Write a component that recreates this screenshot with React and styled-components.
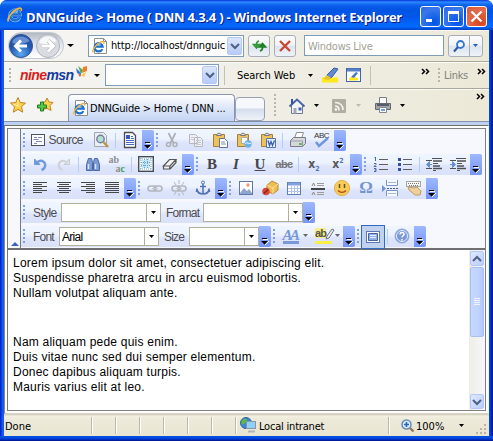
import React from 'react';
import styled, { createGlobalStyle, css } from 'styled-components';

const Global = createGlobalStyle`
  * { box-sizing: border-box; }
  body { margin: 0; overflow: hidden; font-family: "DejaVu Sans Condensed", "DejaVu Sans", sans-serif; font-size: 11px; color: #000; }
  svg { display: block; flex: none; overflow: visible; }
`;

const placed = css`
  flex: none;
  margin-left: ${(p) => p.$gap || 0}px;
  ${(p) => p.$w && `width: ${p.$w}px;`}
`;

/* window frame */
const Window = styled.div`
  width: 493px; height: 441px; display: flex; flex-direction: column;
  background: linear-gradient(90deg, #0019cf 0, #0831d9 1px, #166aee 3px, #0855dd 4px, #0855dd 489px, #0040dc 490px, #001ea0 492px);
  border-radius: 7px 7px 0 0; overflow: hidden;
`;
const TitleBar = styled.header`
  height: 30px; flex: none; display: flex; align-items: center; padding: 0 6px 0 7px;
  background: linear-gradient(#0831d9 0, #2b8bff 2px, #0f62ee 5px, #0055e3 9px, #0256ea 17px, #0366fb 24px, #0467ff 27px, #0040c0 30px);
`;
const Title = styled.h1`
  margin: 3px 0 0 3px; width: 393px; flex: none; white-space: nowrap;
  font: bold 13px "Open Sans", "Noto Sans", sans-serif; letter-spacing: ${(p) => p.$ls}px;
  color: #fff; text-shadow: 1px 1px 0 #0a1883;
`;
const Captions = styled.div`display: flex; gap: 2px; margin: 3px 0 0 auto;`;
const Caption = styled.button`
  width: 21px; height: 21px; padding: 0; border: 1px solid #fff; border-radius: 3px; display: grid; place-items: center;
  background: ${(p) => (p.$close ? 'radial-gradient(circle at 70% 80%, #d8431a, #e4694b 60%, #d7553a)' : 'radial-gradient(circle at 70% 80%, #0054e9, #3a77ec 65%, #2e66dd)')};
`;
const Body = styled.main`flex: 1; margin: 0 4px; display: flex; flex-direction: column; min-height: 0; background: #ece9d8;`;
const BottomEdge = styled.div`height: 5px; flex: none; background: linear-gradient(#0855dd, #0040dc 50%, #00138c);`;

/* browser bars */
const Bar = styled.div`
  height: ${(p) => p.$h}px; flex: none; display: flex; align-items: center;
  background: linear-gradient(90deg, #f5f5f4, #efede2 65%, #ece9d8);
  border-bottom: ${(p) => (p.$line ? '1px solid #aaa89a' : '0')};
  box-shadow: inset 0 1px #fbfaf6;
`;
const Cell = styled.div`${placed}; margin-top: ${(p) => p.$top || 0}px;`;
const Label = styled.span`
  ${placed}; white-space: nowrap; line-height: 15px; margin-top: ${(p) => p.$top || 0}px;
  letter-spacing: ${(p) => p.$ls || 0}px; color: ${(p) => p.$color || '#000'};
`;
const NavPill = styled.div`
  ${placed}; height: 27px; border-radius: 14px; display: flex; justify-content: flex-start; gap: 3px; align-items: center;
  background: linear-gradient(#b4bac4, #e2e5ea 45%, #fff); border: 1px solid #c3c7ce;
`;
const Field = styled.div`
  ${placed}; height: ${(p) => p.$h || 22}px; border: 1px solid #7f9db9; background: #fff; display: flex; align-items: center;
  padding: 0 1px 0 3px;
`;
const DropButton = styled.button`
  width: 15px; height: ${(p) => p.$h || 18}px; margin: 0 0 0 auto; padding: 0; flex: none; border: 1px solid #b5c8f5; border-radius: 2px;
  background: linear-gradient(#dbe6fd, #b7cbf7); display: grid; place-items: center;
`;
const GlassButton = styled.button`
  ${placed}; height: 22px; padding: 0; border: 1px solid #a8adb8; border-radius: 3px; display: flex; align-items: center; justify-content: space-evenly;
  background: linear-gradient(#fbfbfb 0, #f2f3f5 46%, #dde4ef 50%, #eef2f8);
`;
const ButtonRule = styled.i`width: 1px; height: 20px; background: #a8adb8;`;
const Grip = styled.i`
  ${placed}; width: 2px; height: ${(p) => p.$h || 15}px;
  background: repeating-linear-gradient(#b9b6a6 0 2px, transparent 2px 4px);
`;
const Rule = styled.i`${placed}; width: 1px; height: 19px; background: #c4c1b2;`;
const Brand = styled.strong`
  ${placed}; font: italic bold 14px "Liberation Sans", sans-serif; letter-spacing: ${(p) => p.$ls}px; color: #d81e20; white-space: nowrap;
  span { color: #143c9c; }
`;
const Tab = styled.div`
  ${placed}; height: 27px; align-self: flex-end; display: flex; align-items: center; padding-left: 4px;
  border: 1px solid #8a95ad; border-bottom: 0; border-radius: 4px 4px 0 0;
  background: linear-gradient(#fff, #e3ebf9 40%, #c4d5f4);
`;
const NewTab = styled.div`
  ${placed}; height: 24px; align-self: flex-end; border: 1px solid #979fb2; border-radius: 4px;
  background: linear-gradient(#f7f8fb 45%, #d5deed 50%, #eff2f8);
`;
const TabBase = styled.div`height: 4px; flex: none; background: linear-gradient(#8492ac 0 1px, #bed0f2 1px);`;

/* rich text editor */
const Frame = styled.section`
  height: 289px; flex: none; padding: 2px; border: 1px solid; border-color: #716f64 #f5f3e8 #d6d3c4 #8b897c; background: #fff;
  display: flex;
`;
const Editor = styled.div`
  flex: 1; border: 1px solid #808080; display: flex; flex-direction: column; min-width: 0; border-left-color: #77757a;
`;
const ToolArea = styled.div`height: 121px; flex: none; display: flex; background: #f7f8fd; border-bottom: 2px solid #6f6f73;`;
const Collapse = styled.button`
  width: 13px; padding: 0 0 2px 1px; border: 0; border-right: 1px solid #77777d; background: #f7f8fd; flex: none; display: flex; align-items: flex-end; justify-content: center;
`;
const Rows = styled.div`flex: 1; min-width: 0; padding-top: 1px; display: flex; flex-direction: column; gap: 3px;`;
const Row = styled.div`display: flex; height: 21px; flex: none;`;
const Strip = styled.div`
  display: flex; flex: none; align-items: center; height: 21px;
  background: linear-gradient(#eef5ff, #edf3fe 40%, #dde4fb 60%, #d9e1fa);
`;
const Dots = styled.i`
  width: ${(p) => p.$w || 6}px; height: 15px; flex: none;
  background: repeating-linear-gradient(#7f9fe6 0 2px, transparent 2px 4px) 2px 0 / 2px 100% no-repeat;
`;
const Slot = styled.span`width: ${(p) => p.$w || 24}px; height: 20px; flex: none; align-self: flex-start; display: flex; align-items: center; justify-content: center;`;
const Split = styled.i`width: ${(p) => p.$w || 5}px; height: 15px; flex: none; background: linear-gradient(#b4cdf5, #b4cdf5) 2px 0 / 1px 100% no-repeat;`;
const More = styled.button`
  width: 12px; height: 21px; flex: none; padding: 0 0 1px; border: 0; border-radius: 0 2px 2px 0; display: flex; align-items: flex-end; justify-content: center;
  background: linear-gradient(#9db8ff, #7795f7);
`;
const ToolLabel = styled.span`
  ${placed}; font: 12px "Liberation Sans", sans-serif; letter-spacing: ${(p) => p.$ls}px; color: ${(p) => p.$color || '#4c4c50'}; white-space: nowrap;
`;
const Select = styled.div`
  ${placed}; height: 19px; border: 1px solid #b0b09c; background: #fff; display: flex; align-items: center; padding-left: 2px;
`;
const SelectArrow = styled.span`
  width: 14px; height: 17px; margin-left: auto; border-left: 1px solid #b0b09c; display: grid; place-items: center; flex: none;
`;
const Pressed = styled.span`width: 24px; height: 24px; flex: none; border: 1px solid #316ac5; background: #c1d2ee; display: grid; place-items: center;`;
const Page = styled.div`flex: 1; display: flex; background: #fff; min-height: 0;`;
const Text = styled.article`
  flex: 1; padding: 6px 0 0 5px; font: 12px/15px "Liberation Sans", sans-serif; letter-spacing: .22px; color: #000;
  p { margin: 0; white-space: nowrap; }
  p + p { margin-top: 34px; }
`;
const Line = styled.span`display: block;`;
const Scroll = styled.div`width: 16px; flex: none; background: linear-gradient(90deg, #eeede5, #f7f7fd); display: flex; flex-direction: column; padding: 1px 1px 1px 1px;`;
const ScrollButton = styled.button`
  width: 14px; height: 15px; flex: none; padding: 0; border: 1px solid #b4c8f6; border-radius: 2px; background: linear-gradient(135deg, #dfe9ff, #b9cdfa); display: grid; place-items: center;
`;
const Thumb = styled.div`
  width: 14px; height: 70px; margin: 1px 0 auto; border: 1px solid #a9c0f2; border-radius: 2px; background: linear-gradient(90deg, #c6d8ff, #bfd3fd 60%, #b0c8f8); display: grid; place-items: center;
`;

/* status bar */
const Status = styled.footer`flex: 1; display: flex; align-items: center; background: linear-gradient(#c9c6b5 0, #f2efe2 2px, #ece9d8 6px, #e9e5d3);`;
const Pane = styled.i`${placed}; height: 17px; width: 2px; background: linear-gradient(90deg, #bdb9a6 50%, #fff 50%);`;

const S = ({ w = 16, h = 16, children, ...r }) => (
  <svg width={w} height={h} viewBox={`0 0 ${w} ${h}`} fill="none" {...r}>{children}</svg>
);
const Tri = ({ c = '#000', w = 6 }) => <S w={w} h={3}><path d={`M0 0h${w}L${w / 2} 3z`} fill={c} /></S>;
const Chev = ({ up }) => <S w={8} h={6}><path d={up ? 'M0 5l4-4 4 4' : 'M0 1l4 4 4-4'} stroke="#4d6185" strokeWidth="2" /></S>;
const Chevrons = () => <S w={9} h={5}><path d="M1 0l2.500 2.500L1 5M5 0l2.500 2.500L5 5" stroke="#000" strokeWidth="1.500" /></S>;
const MoreBtn = () => <More><S w={8} h={11}><path d="M1 3.500h5" stroke="#000" /><path d="M2 4.500h5M4 10l4-4" stroke="#fff" /><path d="M0 6h7L3.500 9.500z" fill="#000" /></S></More>;

const IeMark = () => (
  <>
    <path d="M12.600 10.500A5 5 0 1 1 13 7.500H4.500" stroke="#1d6fd0" strokeWidth="2.700" />
    <path d="M4.500 6.500C5.500 4 8.500 3 11 4.500" stroke="#7fc4f7" strokeWidth="1.200" />
    <path d="M1.500 14.500C-.5 12 5 4 11 1.600c3-1.200 4 .3 3.200 2.400" stroke="#f0b43a" strokeWidth="1.700" />
  </>
);
const Ie = () => <S><path d="M12.600 10.500A5 5 0 1 1 13 7.500H4.500" stroke="#9fd0fb" strokeWidth="3.600" /><IeMark /></S>;
const IePage = () => <S><path d="M2.500.5h9l3 3v12h-12z" fill="#fff" stroke="#8d8d8d" /><path d="M11.500.5v3h3" stroke="#8d8d8d" /><g transform="translate(0 2.500) scale(.82)"><IeMark /></g></S>;

const Star = ({ plus }) => (
  <S><path d={plus ? 'M10 1l2 4 4 .5-3 3 1 5-4-2-5 1 1-4-2-3 4-.5z' : 'M8 .5l2.200 5 5.300.6-4 3.600 1.200 5.500L8 12.400l-4.700 2.800 1.200-5.500-4-3.600 5.300-.6z'} fill="#fbd04a" stroke="#c0842a" />
    {!plus && <path d="M8 3v7M3 7l5 2" stroke="#fff2a5" />}
    {plus && <path d="M3.500 5h3v3h3v3h-3v3h-3v-3h-3V8h3z" fill="#57c843" stroke="#237c23" />}</S>
);
const Clip = ({ kind }) => (
  <S>
    <path d="M1.500 2.500h11v12h-11z" fill="#edc45c" stroke="#a97d35" />
    <path d="M4.500 3.500c0-3 5-3 5 0z" fill="#ddd" stroke="#777" />
    {!kind && <><path d="M7.500 6.500h5l3 3v6h-8z" fill="#fff" stroke="#607493" /><path d="M9 10h4M9 12h5" stroke="#7d92b4" /></>}
    {kind === 'text' && <><path d="M5.500 5.500h6v6h-6z" fill="#fff" stroke="#aaa" /><circle cx="12" cy="12" r="3.700" fill="#68b4e7" /><path d="M9 12c2-3 4 1 6-1" stroke="#fff" /></>}
    {kind === 'word' && <><path d="M6.500 6.500h9v9h-9z" fill="#e5edfb" stroke="#5576ad" /><path d="M8 8.500l1.500 5 1.500-4 1.500 4 2-5" stroke="#3b5ea8" strokeWidth="1.300" /></>}
  </S>
);
const Align = ({ kind }) => {
  const x = { left: 0, center: 2, right: 5, justify: 0 }[kind];
  const s = kind === 'justify' ? 14 : kind === 'center' ? 10 : 9;
  return <S w={14} h={12}><path d={`M0 .5h14M${x} 2.500h${s}M0 4.500h14M${x} 6.500h${s}M0 8.500h14M${x} 10.500h${s}`} stroke="#46464a" /></S>;
};
const List = ({ num }) => (
  <S>
    <path d="M6 3.500h9M6 8.500h9M6 13.500h9" stroke="#5d5d62" />
    {num ? <path d="M1.500 2l1-1v4M1 7.500h2v1L1 10.500h2.500M1 12.500h2v3H1M1.500 14H3" stroke="#4c66ac" /> : <path d="M1 2h3v3H1zM1 7h3v3H1zM1 12h3v3H1z" fill="#364fa5" />}
  </S>
);
const Dent = ({ right }) => (
  <S><path d="M6 2.500h10M0 4.500h6M7 7.500h5M0 12.500h6M7 14.500h3" stroke="#505055" /><path d="M7 5h9M7 10h7M7 12.500h9" stroke="#505055" strokeWidth="1.400" />
    <path d={right ? 'M0 8.500h3M2.500 5.500l3 3-3 3z' : 'M6 8.500H3M3.500 5.500l-3 3 3 3z'} stroke="#648ed6" fill="#648ed6" /></S>
);
const Link = ({ cut }) => (
  <S><rect x="1" y="6" width="8" height="5" rx="2.500" stroke="#b2b5be" strokeWidth="1.500" /><rect x="7" y="6" width="8" height="5" rx="2.500" stroke="#b2b5be" strokeWidth="1.500" /><path d="M5 8.500h6" stroke="#c6c8ce" />
    {cut && <path d="M8 0v4M3 2l2 3M13 2l-2 3M8 13v3M5 12l-2 3M11 12l2 3" stroke="#b2b5be" />}</S>
);
const Glyph = styled.b`font: bold 15px/16px "Liberation Serif", serif; color: #45454a; font-style: ${(p) => (p.$i ? 'italic' : 'normal')}; text-decoration: ${(p) => p.$deco || 'none'};`;
const Struck = styled.span`font: bold 11px "Liberation Sans", sans-serif; letter-spacing: -.7px; color: #77777c; text-decoration: line-through;`;
const Power = styled.b`font: bold 12px/16px "DejaVu Sans Condensed", sans-serif; color: #55555a; sub, sup { font-size: 7px; line-height: 0; color: #5573b6; }`;
const Spell = styled.span`width: 16px; height: 16px; display: flex; flex-direction: column; font: 8px/7px "Liberation Sans", sans-serif; color: #333; letter-spacing: -.4px;`;
const Swap = styled.span`
  width: 17px; display: flex; flex-direction: column; font: bold 10px/9px "Liberation Serif", serif; color: #8c8c90;
  em { font-style: normal; padding-left: 7px; }
  i { font-style: normal; color: #36a047; }
`;
const Highlight = styled.span`width: 17px; height: 16px; display: flex; align-items: flex-start; font: bold 11px/11px "Liberation Sans", sans-serif; letter-spacing: -.8px; color: #565640; background: linear-gradient(#f6ee8c, #f6ee8c) 0 0 / 11px 10px no-repeat; border-bottom: 3px solid #f8ee49;`;
const FontColor = styled.span`width: 16px; height: 15px; font: italic bold 15px/13px "Liberation Serif", serif; letter-spacing: -2.500px; color: #779ad6; border-bottom: 3px solid #779ad6;`;
const Omega = styled.span`font: bold 17px/16px "Liberation Serif", serif; color: #7493d2;`;

const Icons = {
  source: <S w={14} h={12}><rect x=".5" y=".5" width="13" height="11" fill="#f9fbff" stroke="#51515a" /><path d="M3 3.500h3M7 3.500h4M2.500 5.500h5M5 7.500h6M3 9.500h3" stroke="#828ab2" /></S>,
  preview: <S><path d="M1.500.5h9l3 3v11h-12z" fill="#eceef3" stroke="#a3a6ae" /><circle cx="7.500" cy="7" r="3.700" fill="#b8dcd7" stroke="#6e7f97" strokeWidth="1.400" /><path d="M10.500 10l4.500 5" stroke="#bd9547" strokeWidth="2.500" /></S>,
  doc: <S w={14}><path d="M1.500.5h8l3 3v12h-11z" fill="#fff" stroke="#4b4b52" strokeWidth="1.300" /><path d="M3 3h4v4H3z" fill="#3159c9" /><path d="M8 4.500h2M8 6.500h3M3 8.500h8M3 10.500h8M3 12.500h8" stroke="#4668c6" /></S>,
  cut: <S><path d="M4.500 1l5 10M11.500 1l-5 10" stroke="#adb0b7" strokeWidth="1.700" /><circle cx="4.500" cy="12.500" r="2" stroke="#adb0b7" strokeWidth="1.500" /><circle cx="11" cy="12.500" r="2" stroke="#adb0b7" strokeWidth="1.500" /></S>,
  copy: <S><path d="M1.500 2.500h6l2 2v7h-8zM6.500 5.500h6l2 2v7h-8z" fill="#eff0f4" stroke="#b5b7be" /><path d="M3 5.500h4M3 7.500h3M8 8.500h5M8 10.500h5M8 12.500h5" stroke="#c8cacf" /></S>,
  print: <S><path d="M4.500 6.500l2-6h7l-2 6z" fill="#fff" stroke="#8c8e95" /><path d="M.5 8.500l3-3h12v6l-3 3H.5z" fill="#d5d7dc" stroke="#797c85" /><path d="M1 9h11.500v5" stroke="#9a9da5" /><path d="M9 12h3" stroke="#62bd54" strokeWidth="2" /></S>,
  undo: <S><path d="M2.500 3v5.500H8z" fill="#6f9be4" stroke="#6f97dd" /><path d="M5 6.500c5-4 9 0 8 4-.4 1.800-2 3-3.500 3.500" stroke="#7399dd" strokeWidth="2.400" /></S>,
  redo: <S><path d="M13.500 3v5.500H8z" fill="#dfe1e6" stroke="#c6c9cf" /><path d="M11 6.500c-5-4-9 0-8 4 .4 1.800 2 3 3.500 3.500" stroke="#cfd2d8" strokeWidth="2.200" /></S>,
  find: <S><path d="M3.500 2.500h3l1 4v8h-6v-6zM12.500 2.500h-3l-1 4v8h6v-6z" fill="#7b9ad8" stroke="#4c689f" /><path d="M3.500 8v5M10.500 8v5" stroke="#d7e5ff" strokeWidth="1.500" /></S>,
  selectAll: <S><rect x=".7" y=".7" width="14.600" height="14.600" fill="#fff" stroke="#444b55" strokeWidth="1.400" /><path d="M4 4h8v8H4z" fill="#c4e8f8" /><path d="M3 2v12M13 2v12M2 3h12M2 13h12M6.500 3v10M9.500 3v10M3 6.500h10M3 9.500h10" stroke="#6aa5c8" strokeDasharray="1 1" /></S>,
  eraser: <S><path d="M1.500 10l6-6.500h6.500l-6 6.500zM1.500 10v3h6l.5-3M8 13l6-6.500v-3" fill="#f4f3f2" stroke="#55555a" strokeWidth="1.200" /></S>,
  anchor: <S><circle cx="8" cy="2.500" r="1.500" stroke="#5573b4" /><path d="M8 4v10M5 6.500h6M2 9.500c.5 3 3 4.500 6 4.500s5.500-1.500 6-4.500M2 8.500L1.500 12M14 8.500l.5 3.500" stroke="#5573b4" strokeWidth="1.600" /></S>,
  image: <S w={14} h={14}><rect x=".5" y=".5" width="13" height="13" fill="#fff" stroke="#62769f" /><path d="M1 12l4-5 3 3 2-2 3 4v1H1z" fill="#8ca5d0" /><circle cx="9" cy="4" r="1.700" fill="#ed9a73" /></S>,
  flash: <S><path d="M5 5l5-4 6 3v6l-5 4-6-3z" fill="#edbf52" stroke="#b98835" /><path d="M5 5l6 3 5-4M11 8v6" stroke="#fbe09a" /><circle cx="4" cy="11.500" r="3.800" fill="#d54b35" /><path d="M2 13.500l4-4" stroke="#842518" strokeWidth="1.500" /></S>,
  table: <S w={14} h={13}><rect x=".5" y=".5" width="13" height="12" fill="#fff" stroke="#617db8" /><path d="M1 2h12" stroke="#81a2df" strokeWidth="3" /><path d="M1 6.500h12M1 9.500h12M4.500 4v8M7.500 4v8M10.500 4v8" stroke="#b2c5e9" /></S>,
  rule: <S><path d="M1 9h14" stroke="#44444a" strokeWidth="2" /><path d="M7 3.500h7M7 5.500h7M7 12.500h7M7 14.500h7" stroke="#9b9c99" /><path d="M2 6l1.500-3L5 6M2 15l1.500-3L5 15" stroke="#8d8a73" /></S>,
  smiley: <S><circle cx="8" cy="8" r="7.600" fill="#f8cd56" stroke="#e3ae4a" /><path d="M5.500 4v4M10.500 4v4" stroke="#6b4b20" strokeWidth="1.500" /><path d="M4 10.500c2 2.500 6 2.500 8 0" stroke="#b74526" strokeWidth="1.400" /></S>,
  pageBreak: <S><path d="M4.500 0v5.500h11V0M4.500 16v-5.500h11V16" fill="#f7faff" stroke="#7b93c1" /><path d="M6 2.500h8M6 13.500h8" stroke="#a7b7d5" /><path d="M5 8.500h11" stroke="#55607a" strokeDasharray="2 1" /><path d="M0 5l4 3.500L0 12z" fill="#6d93d7" /></S>,
  keyboard: <S><rect x=".5" y="1.500" width="14" height="5" fill="#f6f6f3" stroke="#a8a8a2" /><path d="M2 3.500h11M3 5.500h9" stroke="#777" strokeDasharray="1 1" /><path d="M2 7l6 1 3-1 4 4-1 4H9L3 10z" fill="#eed09a" stroke="#c09e62" /></S>,
  help: <S><circle cx="8" cy="8" r="7" fill="#7998d8" stroke="#90aae0" /><circle cx="8" cy="8" r="5.500" stroke="#e6eeff" /><path d="M6 6.500c0-3 4.500-2.500 4 0-.2 1-2 1.300-2 3M8 11v1.500" stroke="#fff" strokeWidth="1.500" /></S>,
};
const I = ({ n }) => <Slot>{Icons[n]}</Slot>;

function TitleSection() {
  return (
    <TitleBar>
      <Ie />
      <Title $ls={-0.23}>DNNGuide &gt; Home ( DNN 4.3.4 ) - Windows Internet Explorer</Title>
      <Captions>
        <Caption><S w={13} h={13}><path d="M2 10.500h6" stroke="#fff" strokeWidth="3" /></S></Caption>
        <Caption><S w={13} h={13}><path d="M1.500 1.500h10v10h-10z" stroke="#fff" /><path d="M1 2.500h11" stroke="#fff" strokeWidth="3" /></S></Caption>
        <Caption $close><S w={13} h={13}><path d="M1.500 1.500l10 10M11.500 1.500l-10 10" stroke="#fff" strokeWidth="2.300" /></S></Caption>
      </Captions>
    </TitleBar>
  );
}

function AddressBar() {
  return (
    <Bar $h={32} $line>
      <NavPill $gap={4} $w={56}>
        <S w={24} h={24}><defs><radialGradient id="b" cx=".5" cy=".85"><stop stopColor="#5aa9f4" /><stop offset="1" stopColor="#2455ad" /></radialGradient></defs><circle cx="12" cy="12" r="11.500" fill="url(#b)" stroke="#33558f" /><path d="M3.500 7c3-6 14-6 17 0-4 3-12 4-17 2z" fill="#8db1e7" opacity=".65" /><path d="M18 12H7M12 6.500L6.500 12l5.500 5.500" stroke="#fff" strokeWidth="3" /></S>
        <S w={24} h={24}><circle cx="12" cy="12" r="11.500" fill="#d9dce1" stroke="#aeb3bb" /><path d="M3.500 7c3-6 14-6 17 0-4 3-12 4-17 2z" fill="#f7f8fa" /><path d="M6 12h11M12 6.500l5.500 5.500-5.500 5.500" stroke="#b4b7bd" strokeWidth="4.200" /><path d="M6 12h11M12 6.500l5.500 5.500-5.500 5.500" stroke="#fff" strokeWidth="3" /></S>
      </NavPill>
      <Cell $gap={3}><Tri w={7} /></Cell>
      <Field $gap={14} $w={156}>
        <IePage /><Label $gap={3} $w={115} $ls={-0.15}>http://localhost/dnnguic</Label><DropButton><Chev /></DropButton>
      </Field>
      <GlassButton $gap={4} $w={22}><S w={14} h={14}><path d="M4.500 10V5C4.500 3.500 5.500 2.500 7 2M1.500 5.500l3 3.500 3-3.500z" stroke="#2f9a36" strokeWidth="1.700" /><path d="M10.500 4v5c0 1.500-1 2.500-2.500 3M7.500 8l3-3.500 3 3.500z" stroke="#1c7d22" strokeWidth="1.700" /></S></GlassButton>
      <GlassButton $gap={4} $w={22}><S w={12} h={12}><path d="M1 1l10 10M11 1L1 11" stroke="#c54a38" strokeWidth="2.400" /></S></GlassButton>
      <Field $gap={8} $w={140} $h={21}><Label $w={70} $top={1} $color="#a3a195" $ls={-0.25}>Windows Live</Label></Field>
      <GlassButton $gap={4} $w={35}><S w={12} h={12}><circle cx="7.500" cy="4.500" r="3.500" fill="#eef6ff" stroke="#3675d0" strokeWidth="1.800" /><path d="M5 7l-4 4.500" stroke="#275ab3" strokeWidth="2.200" /></S><ButtonRule /><Tri w={5} c="#1f5fbf" /></GlassButton>
    </Bar>
  );
}

function SearchBar() {
  return (
    <Bar $h={27} $line>
      <Grip $gap={5} />
      <Brand $gap={9} $w={56} $ls={-0.6}>nine<span>msn</span></Brand>
      <Cell $top={-6}><S w={11} h={12}><path d="M5 7L0 2l1 5 4 2z" fill="#3977cf" /><path d="M5 8L2 0l5 4z" fill="#59ad47" /><path d="M6 7l1-6 4-1v5z" fill="#ee7e29" /><path d="M5 9l5-3-2 5z" fill="#f6c83c" /><path d="M5 9L2 8l2 3z" fill="#d83b2c" /></S></Cell>
      <Cell $gap={7}><Tri /></Cell>
      <Field $gap={5} $w={114} $h={22}><DropButton><Chev /></DropButton></Field>
      <Rule $gap={5} />
      <Label $gap={12} $w={60} $ls={-0.05}>Search Web</Label>
      <Cell $gap={11}><Tri w={5} /></Cell>
      <Cell $gap={9}><S w={17}><path d="M0 13h16" stroke="#ffe91a" strokeWidth="5" /><path d="M5 8l7-7 4 1-6 8-4 2z" fill="#5f8bd5" stroke="#38589d" /><path d="M1 12l4-4 4 3-2 2z" fill="#e9c42e" /></S></Cell>
      <Cell $gap={7}><S><rect x=".5" y="1.500" width="14" height="13" fill="#fff" stroke="#3f63a5" /><path d="M1 3h13" stroke="#567fc5" strokeWidth="3" /><path d="M3 12h9" stroke="#ffe91a" strokeWidth="3" /><path d="M5 10l5-5 2 1-4 5z" fill="#4978c4" /></S></Cell>
      <Rule $gap={8} />
      <Cell $gap={50} $top={-8}><Chevrons /></Cell>
      <Grip $gap={8} />
      <Label $gap={4} $w={26} $top={1} $ls={-0.3} $color="#85837a">Links</Label>
      <Cell $gap={7} $top={-8}><Chevrons /></Cell>
    </Bar>
  );
}

function TabBar() {
  return (
    <Bar $h={32}>
      <Cell $gap={6}><Star /></Cell>
      <Cell $gap={11}><Star plus /></Cell>
      <Tab $gap={15} $w={167}><IePage /><Label $gap={1} $top={1} $ls={-0.2}>DNNGuide &gt; Home ( DNN ...</Label></Tab>
      <NewTab $w={30} />
      <Grip $gap={9} $h={22} />
      <Cell $gap={13} $top={1}><S><path d="M2.500 7v8.500h11V7L8 2z" fill="#f4f4f6" stroke="#707790" /><path d="M.5 8.500L8 1.500l7.500 7" stroke="#4965a3" strokeWidth="2" /><path d="M3 1v5" stroke="#31569f" strokeWidth="2" /><path d="M4.500 10v5.500h3V10z" fill="#a1a7b8" /><path d="M9.500 9.500h3v3h-3z" fill="#3f62af" /></S></Cell>
      <Cell $gap={9}><Tri w={5} /></Cell>
      <Cell $gap={13} $top={2}><S w={14} h={14}><rect width="14" height="14" rx="1" fill="#b0ada2" /><path d="M3 7c3 0 4 2 4 4.500M3 3.500c5 0 8 3 8 7.500" stroke="#f5f3eb" strokeWidth="1.700" /><circle cx="4" cy="10.500" r="1.300" fill="#fff" /></S></Cell>
      <Cell $gap={10}><Tri w={5} c="#bdbab0" /></Cell>
      <Cell $gap={14}><S><path d="M4.500.5h7v6h-7z" fill="#fff" stroke="#777d87" /><path d="M.5 6.500h15v6H.5z" fill="#a0a4aa" stroke="#646971" /><path d="M2 8h12" stroke="#555d68" strokeWidth="2" /><path d="M4.500 10.500h7v5h-7z" fill="#fff" stroke="#828892" /><path d="M6 13h4" stroke="#6ea2df" strokeWidth="2" /></S></Cell>
      <Cell $gap={9}><Tri w={5} /></Cell>
      <Cell $gap={71} $top={-17}><Chevrons /></Cell>
    </Bar>
  );
}

const Drop = ({ gap, w, children }) => <Select $gap={gap} $w={w}>{children}<SelectArrow><Tri w={5} /></SelectArrow></Select>;

function ToolRows() {
  return (
    <Rows>
      <Row>
        <Strip><Dots $w={7} /><Slot $w={61}>{Icons.source}<ToolLabel $gap={4} $w={38} $ls={-0.6}>Source</ToolLabel></Slot><I n="preview" /><Split /><I n="doc" /><MoreBtn /></Strip>
        <Strip><Dots /><I n="cut" /><I n="copy" /><Slot><Clip /></Slot><Slot><Clip kind="text" /></Slot><Slot><Clip kind="word" /></Slot><Split $w={6} /><I n="print" />
          <Slot><Spell>ABC<S w={15} h={10}><path d="M2 3l3 4 9-8" stroke="#6f97df" strokeWidth="2.500" /></S></Spell></Slot><MoreBtn /></Strip>
      </Row>
      <Row>
        <Strip><Dots $w={7} /><I n="undo" /><I n="redo" /><Split /><I n="find" /><Slot><Swap><span>ab</span><em>a<i>c</i></em></Swap></Slot><Split /><I n="selectAll" /><I n="eraser" /><MoreBtn /></Strip>
        <Strip><Dots /><Slot><Glyph>B</Glyph></Slot><Slot><Glyph $i>I</Glyph></Slot><Slot><Glyph $deco="underline">U</Glyph></Slot><Slot><Struck>abc</Struck></Slot><Split $w={6} /><Slot><Power>x<sub>2</sub></Power></Slot><Slot><Power>x<sup>2</sup></Power></Slot><MoreBtn /></Strip>
        <Strip><Dots $w={7} /><Slot><List num /></Slot><Slot><List /></Slot><Split /><Slot><Dent /></Slot><Slot><Dent right /></Slot><MoreBtn /></Strip>
      </Row>
      <Row>
        <Strip><Dots $w={7} />{['left', 'center', 'right', 'justify'].map((k) => <Slot key={k}><Align kind={k} /></Slot>)}<MoreBtn /></Strip>
        <Strip><Dots $w={7} /><Slot><Link /></Slot><Slot><Link cut /></Slot><I n="anchor" /><MoreBtn /></Strip>
        <Strip><Dots $w={7} /><I n="image" /><I n="flash" /><I n="table" /><I n="rule" /><I n="smiley" /><Slot><Omega>Ω</Omega></Slot><I n="pageBreak" /><I n="keyboard" /><MoreBtn /></Strip>
      </Row>
      <Row>
        <Strip><Dots $w={7} /><ToolLabel $gap={5} $w={23} $ls={-0.6}>Style</ToolLabel><Drop gap={5} w={100} /><ToolLabel $gap={5} $w={32} $ls={-0.8}>Format</ToolLabel><Drop gap={5} w={100} /><MoreBtn /></Strip>
      </Row>
      <Row>
        <Strip><Dots $w={7} /><ToolLabel $gap={5} $w={21} $ls={-0.8}>Font</ToolLabel><Drop gap={5} w={100}><ToolLabel $color="#000" $ls={-0.7}>Arial</ToolLabel></Drop><ToolLabel $gap={5} $w={20} $ls={-0.8}>Size</ToolLabel><Drop gap={5} w={70} /><MoreBtn /></Strip>
        <Strip><Dots $w={7} /><Slot $w={34}><FontColor>AA</FontColor><Cell $gap={4} $top={-2}><Tri w={5} c="#66666b" /></Cell></Slot><Slot $w={31}><Highlight>ab<S w={8} h={12}><path d="M6 1L1 8l-1 3 3-1 5-8z" fill="#e9edf5" stroke="#6f737c" /></S></Highlight><Cell $gap={3} $top={-2}><Tri w={5} c="#66666b" /></Cell></Slot><MoreBtn /></Strip>
        <Strip><Dots $w={6} /><Pressed><S w={14} h={12}><rect x=".5" y=".5" width="13" height="11" fill="#fff" stroke="#5b78b5" /><path d="M2.500 2.500h9v7h-9z" fill="#8dafea" stroke="#49649d" /><path d="M4 4.500h6M4 6.500h6" stroke="#eef4ff" /></S></Pressed><Split /><I n="help" /><MoreBtn /></Strip>
      </Row>
    </Rows>
  );
}

export default function App() {
  return (
    <>
      <Global />
      <Window>
        <TitleSection />
        <Body>
          <AddressBar />
          <SearchBar />
          <TabBar />
          <TabBase />
          <Frame>
            <Editor>
              <ToolArea>
                <Collapse><S w={8} h={4}><path d="M4 0l4 4H0z" fill="#3c63be" /></S></Collapse>
                <ToolRows />
              </ToolArea>
              <Page>
                <Text>
                  <p>
                    <Line>Lorem ipsum dolor sit amet, consectetuer adipiscing elit.</Line>
                    <Line>Suspendisse pharetra arcu in arcu euismod lobortis.</Line>
                    <Line>Nullam volutpat aliquam ante.</Line>
                  </p>
                  <p>
                    <Line>Nam aliquam pede quis enim.</Line>
                    <Line>Duis vitae nunc sed dui semper elementum.</Line>
                    <Line>Donec dapibus aliquam turpis.</Line>
                    <Line>Mauris varius elit at leo.</Line>
                  </p>
                </Text>
                <Scroll>
                  <ScrollButton><Chev up /></ScrollButton>
                  <Thumb><S w={6} h={8}><path d="M0 .5h6M0 2.500h6M0 4.500h6M0 6.500h6" stroke="#f0f5ff" /></S></Thumb>
                  <ScrollButton><Chev /></ScrollButton>
                </Scroll>
              </Page>
            </Editor>
          </Frame>
          <Status>
            <Label $gap={1} $w={86} $top={2}>Done</Label>
            {[0, 22, 22, 22, 22, 22, 22].map((g, i) => <Pane key={i} $gap={g} />)}
            <Cell $gap={3}><S><circle cx="6" cy="6" r="5.500" fill="#3d86d4" stroke="#316498" /><path d="M2 3c4-3 6 0 4 2S3 8 1 7z" fill="#5cbb48" /><rect x="6.500" y="4.500" width="9" height="7" fill="#93cff4" stroke="#8797aa" /><path d="M8 14.500h7" stroke="#aeb5bf" strokeWidth="2" /></S></Cell>
            <Label $gap={3} $w={66} $top={2} $ls={-0.2}>Local intranet</Label>
            <Pane $gap={63} />
            <Cell $gap={11}><S w={13} h={13}><circle cx="5.500" cy="5.500" r="4.500" fill="#d9edff" stroke="#668bb9" strokeWidth="1.500" /><path d="M5.500 3v5M3 5.500h5" stroke="#2a63bd" strokeWidth="1.600" /><path d="M9 9l3.500 3.500" stroke="#93785f" strokeWidth="2.400" /></S></Cell>
            <Label $gap={2} $w={30} $top={2}>100%</Label>
            <Cell $gap={13}><Tri w={5} /></Cell>
            <Cell $gap={12} $top={9}><S w={11} h={11}><path d="M8 0h2v2H8zM4 4h2v2H4zM8 4h2v2H8zM0 8h2v2H0zM4 8h2v2H4zM8 8h2v2H8z" fill="#b9b5a2" /></S></Cell>
          </Status>
        </Body>
        <BottomEdge />
      </Window>
    </>
  );
}
